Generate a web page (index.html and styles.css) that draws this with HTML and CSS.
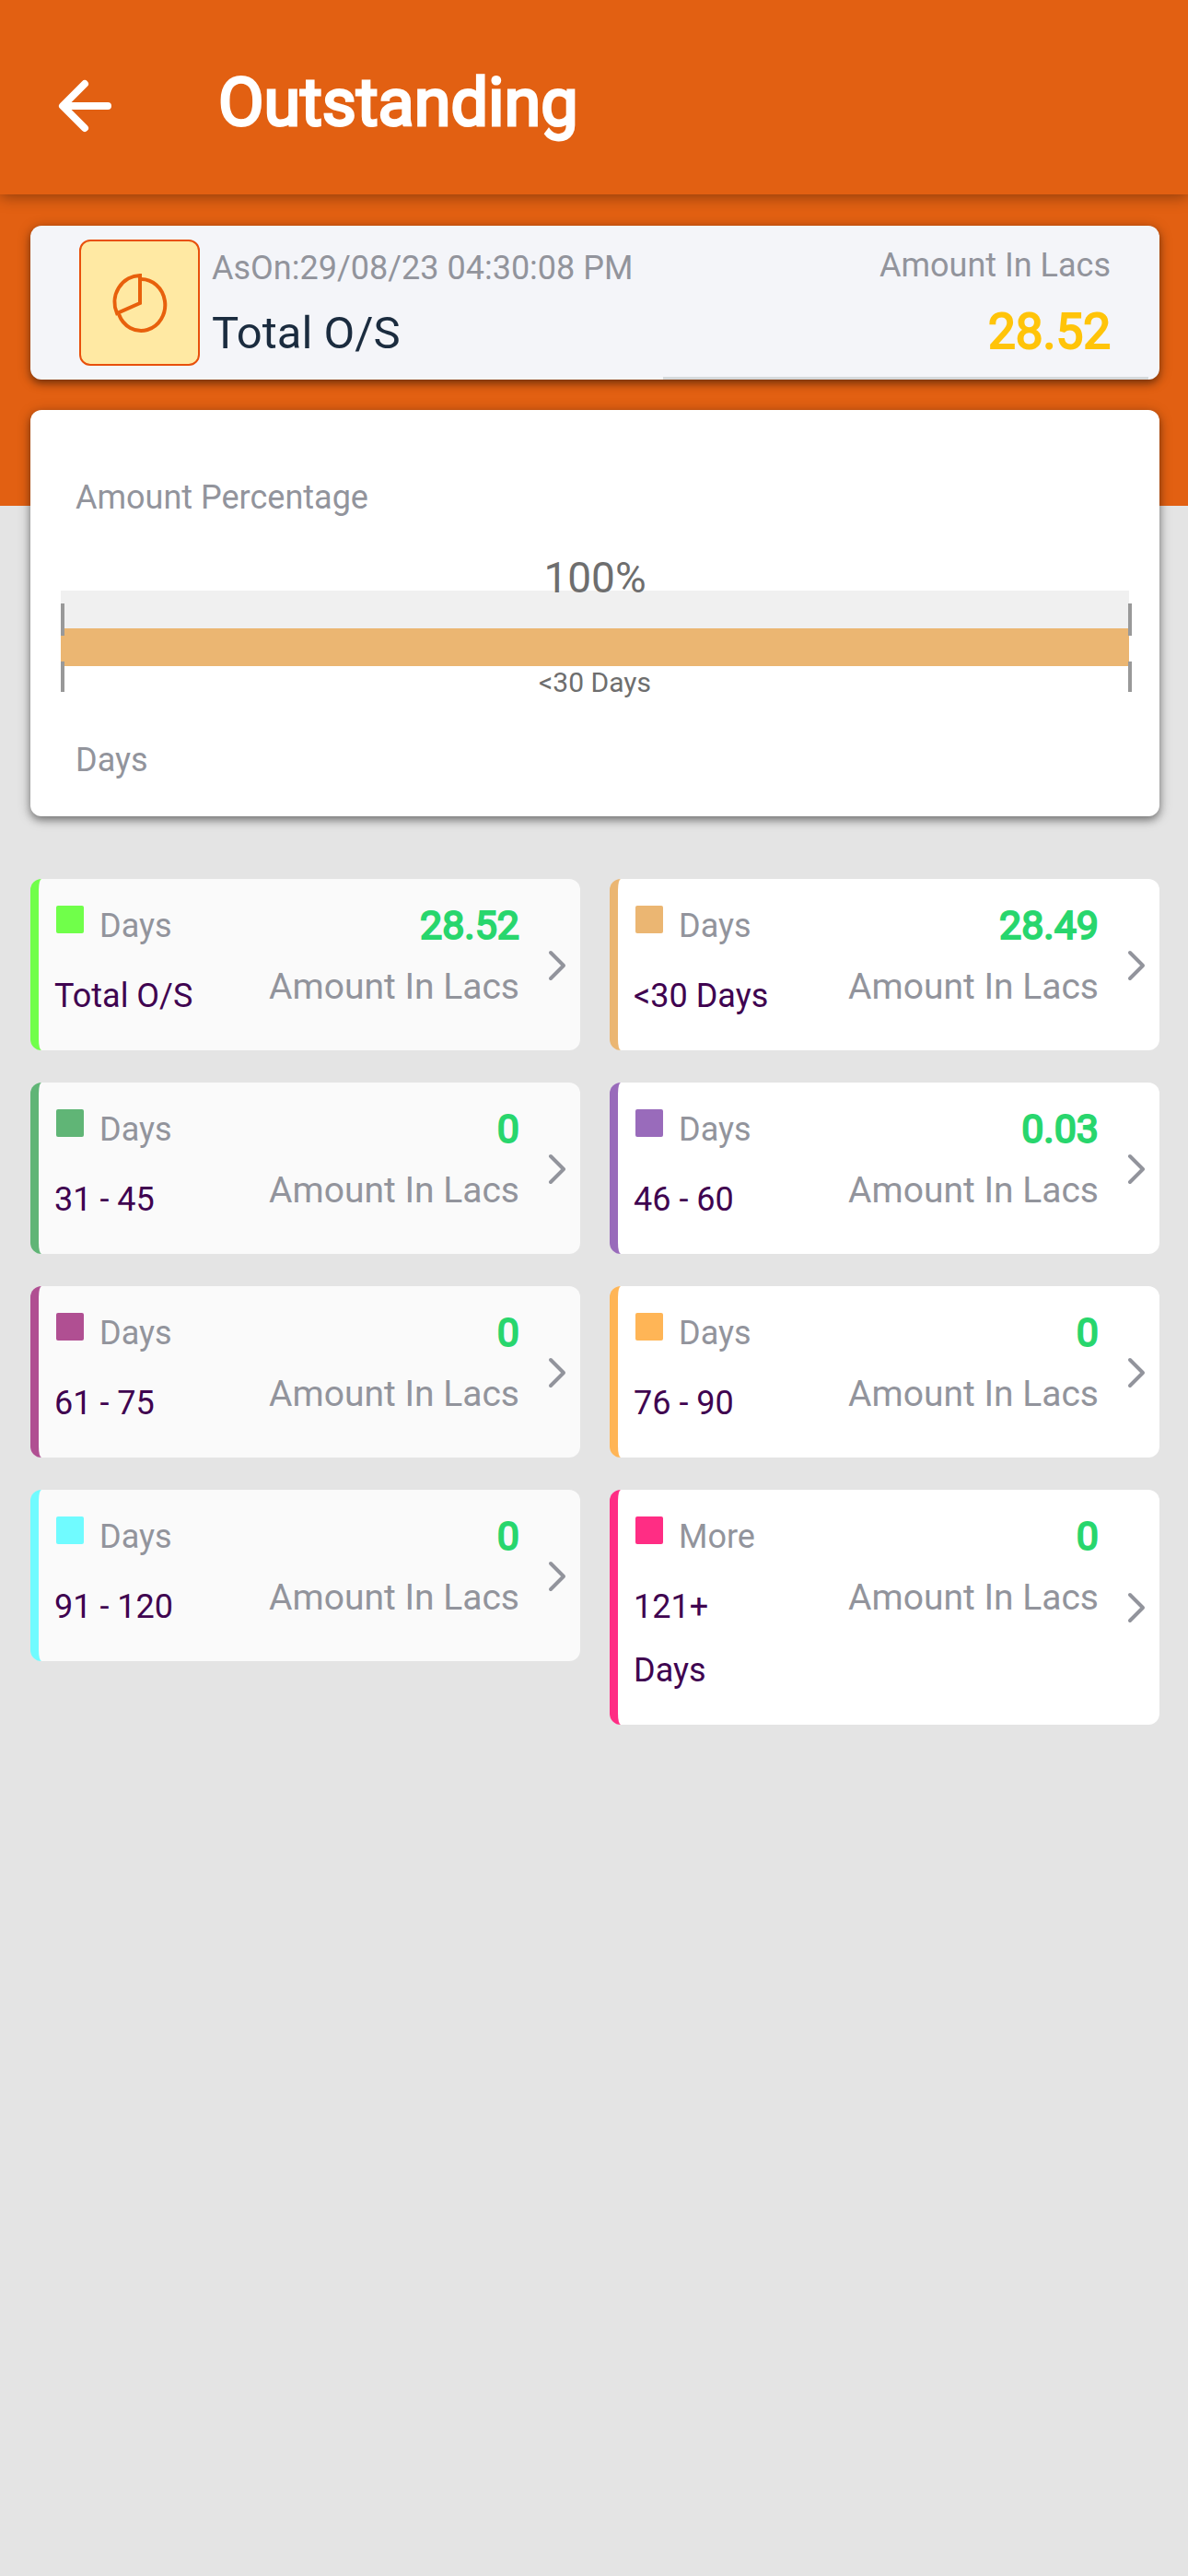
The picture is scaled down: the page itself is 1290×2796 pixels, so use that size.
FILE: index.html
```html
<!DOCTYPE html>
<html lang="en">

<head>
  <meta charset="UTF-8">
  <meta name="viewport" content="width=device-width, initial-scale=1.0">
  <title>Outstanding</title>
  <link rel="stylesheet" href="styles.css">
</head>

<body>
  <header class="toolbar">
    <button class="back" type="button" aria-label="Back">
      <svg width="58" height="58" viewBox="0 0 58 58" fill="none" stroke="currentColor" stroke-width="8" stroke-linecap="round" stroke-linejoin="round">
        <path d="M29 5 5 29l24 24M6 29h48" />
      </svg>
    </button>
    <h1 class="title">Outstanding</h1>
  </header>

  <main class="content">
    <section class="card summary">
      <div class="summary-icon">
        <svg width="64" height="66" viewBox="0 0 64 66" fill="none" stroke="currentColor" stroke-width="4">
          <path d="M32 3v30L7 44A28 29 0 0 1 32 3z" />
          <path d="M32 7A26 28 0 1 1 9 45" />
        </svg>
      </div>
      <div class="summary-info">
        <p class="caption">AsOn:29/08/23 04:30:08 PM</p>
        <h2 class="summary-name">Total O/S</h2>
      </div>
      <div class="summary-total">
        <p class="caption">Amount In Lacs</p>
        <p class="summary-value">28.52</p>
      </div>
    </section>

    <section class="card chart">
      <p class="caption">Amount Percentage</p>
      <div class="scale">
        <div class="scale-percent">100%</div>
        <div class="scale-bars">
          <div class="scale-track"></div>
          <div class="scale-fill" style="width: 100%"></div>
        </div>
        <div class="scale-label">&lt;30 Days</div>
      </div>
      <p class="caption">Days</p>
    </section>

    <nav class="tiles">
      <a class="tile lime" href="#total">
        <div class="range">
          <div class="range-head"><i class="swatch"></i>Days</div>
          <div class="range-name">Total O/S</div>
        </div>
        <div class="amount"><b>28.52</b><span>Amount In Lacs</span></div>
        <svg class="chevron" viewBox="0 0 20 34"><path d="M3 3l14 14L3 31" /></svg>
      </a>
      <a class="tile sand" href="#under-30">
        <div class="range">
          <div class="range-head"><i class="swatch"></i>Days</div>
          <div class="range-name">&lt;30 Days</div>
        </div>
        <div class="amount"><b>28.49</b><span>Amount In Lacs</span></div>
        <svg class="chevron" viewBox="0 0 20 34"><path d="M3 3l14 14L3 31" /></svg>
      </a>
      <a class="tile green" href="#31-45">
        <div class="range">
          <div class="range-head"><i class="swatch"></i>Days</div>
          <div class="range-name">31 - 45</div>
        </div>
        <div class="amount"><b>0</b><span>Amount In Lacs</span></div>
        <svg class="chevron" viewBox="0 0 20 34"><path d="M3 3l14 14L3 31" /></svg>
      </a>
      <a class="tile purple" href="#46-60">
        <div class="range">
          <div class="range-head"><i class="swatch"></i>Days</div>
          <div class="range-name">46 - 60</div>
        </div>
        <div class="amount"><b>0.03</b><span>Amount In Lacs</span></div>
        <svg class="chevron" viewBox="0 0 20 34"><path d="M3 3l14 14L3 31" /></svg>
      </a>
      <a class="tile plum" href="#61-75">
        <div class="range">
          <div class="range-head"><i class="swatch"></i>Days</div>
          <div class="range-name">61 - 75</div>
        </div>
        <div class="amount"><b>0</b><span>Amount In Lacs</span></div>
        <svg class="chevron" viewBox="0 0 20 34"><path d="M3 3l14 14L3 31" /></svg>
      </a>
      <a class="tile orange" href="#76-90">
        <div class="range">
          <div class="range-head"><i class="swatch"></i>Days</div>
          <div class="range-name">76 - 90</div>
        </div>
        <div class="amount"><b>0</b><span>Amount In Lacs</span></div>
        <svg class="chevron" viewBox="0 0 20 34"><path d="M3 3l14 14L3 31" /></svg>
      </a>
      <a class="tile cyan" href="#91-120">
        <div class="range">
          <div class="range-head"><i class="swatch"></i>Days</div>
          <div class="range-name">91 - 120</div>
        </div>
        <div class="amount"><b>0</b><span>Amount In Lacs</span></div>
        <svg class="chevron" viewBox="0 0 20 34"><path d="M3 3l14 14L3 31" /></svg>
      </a>
      <a class="tile pink" href="#over-121">
        <div class="range">
          <div class="range-head"><i class="swatch"></i>More</div>
          <div class="range-name">121+<br>Days</div>
        </div>
        <div class="amount"><b>0</b><span>Amount In Lacs</span></div>
        <svg class="chevron" viewBox="0 0 20 34"><path d="M3 3l14 14L3 31" /></svg>
      </a>
    </nav>
  </main>
</body>

</html>
```
FILE: styles.css
```css
:root {
  --brand: #e26012;
  --page: #e4e4e4;
  --muted: #92949c;
}

* {
  box-sizing: border-box;
}

body {
  margin: 0;
  min-height: 100vh;
  font-family: Roboto, "Liberation Sans", sans-serif;
  font-size: 36px;
  line-height: 44px;
  /* orange band behind the first cards */
  background: linear-gradient(var(--brand) 549px, var(--page) 549px);
}

h1,
h2,
p {
  margin: 0;
}

/* toolbar */
.toolbar {
  display: flex;
  align-items: center;
  gap: 116px;
  height: 211px;
  padding: 18px 63px 0;
  color: #fff;
  background: var(--brand);
  box-shadow: 0 2px 16px rgba(0, 0, 0, 0.4);
}

.back {
  display: flex;
  padding: 0;
  color: inherit;
  background: none;
  border: 0;
  cursor: pointer;
}

.title {
  padding-bottom: 6px;
  font-size: 72px;
  line-height: 84px;
  font-weight: 400;
  -webkit-text-stroke: 3px currentColor;
}

.content {
  padding: 34px 31px 34px 33px;
}

/* cards */
.card {
  border-radius: 12px;
  background: #fff;
  box-shadow: 0 4px 8px rgba(0, 0, 0, 0.4), 0 2px 16px rgba(0, 0, 0, 0.2);
}

.caption {
  color: var(--muted);
}

.summary {
  position: relative;
  display: flex;
  gap: 13px;
  padding: 15px 53px 15px 53px;
  background: #f4f5f9;
}

.summary::after {
  content: "";
  position: absolute;
  left: 56%;
  right: 12px;
  bottom: 0;
  height: 3px;
  background: #d5d9db;
}

.summary-icon {
  display: flex;
  justify-content: center;
  align-items: center;
  width: 131px;
  height: 137px;
  color: #e8600c;
  background: #ffe9a3;
  border: 2px solid #e8500c;
  border-radius: 12px;
}

.summary-info {
  flex: 1;
  padding-top: 9px;
}

.summary-name {
  margin-top: 19px;
  font-size: 49px;
  line-height: 60px;
  font-weight: 400;
  color: #1b2c3f;
}

.summary-total {
  padding-top: 6px;
  text-align: right;
}

.summary-value {
  margin-top: 20px;
  font-size: 53px;
  line-height: 60px;
  color: #ffc409;
  -webkit-text-stroke: 2px currentColor;
}

/* percentage chart */
.chart {
  margin-top: 33px;
  padding: 73px 30px 39px 33px;
}

.chart .caption {
  padding-left: 16px;
}

.scale {
  margin: 38px 0 44px;
  text-align: center;
  color: #6e6e6e;
}

/* the number hangs a little over the track */
.scale-percent {
  position: relative;
  z-index: 1;
  height: 41px;
  padding-right: 3px;
  font-size: 46px;
  line-height: 54px;
}

.scale-bars {
  position: relative;
  padding-right: 3px;
}

.scale-track {
  height: 41px;
  background: #f0f0f0;
}

.scale-fill {
  height: 41px;
  background: #ebb672;
}

/* end ticks, above and below the bar */
.scale-bars::before,
.scale-bars::after {
  content: "";
  position: absolute;
  top: 14px;
  width: 4px;
  height: 96px;
  background: linear-gradient(#999 35px, transparent 35px 63px, #999 63px);
}

.scale-bars::before {
  left: 0;
}

.scale-bars::after {
  right: 0;
}

.scale-label {
  padding-right: 3px;
  font-size: 30px;
  line-height: 36px;
}

/* ageing tiles */
.tiles {
  display: grid;
  grid-template-columns: 1fr 1fr;
  align-items: start;
  gap: 35px 32px;
  margin-top: 68px;
}

.tile {
  display: flex;
  padding: 29px 15px 24px 17px;
  color: var(--muted);
  text-decoration: none;
  background: #fff;
  border-left: 9px solid var(--tint);
  border-radius: 12px;
}

.tile:nth-child(odd) {
  background: #fafafa;
}

.range-head {
  display: flex;
  gap: 17px;
  padding-left: 2px;
}

.swatch {
  width: 30px;
  height: 30px;
  border-radius: 2px;
  background: var(--tint);
}

.range-name {
  margin-top: 20px;
  line-height: 69px;
  color: #3f0350;
}

.amount {
  display: flex;
  flex-direction: column;
  gap: 24px;
  margin-left: auto;
  text-align: right;
  font-size: 39px;
}

.amount b {
  font-size: 43px;
  line-height: 42px;
  font-weight: 400;
  color: #28d66d;
  -webkit-text-stroke: 2px currentColor;
}

.chevron {
  align-self: center;
  width: 20px;
  height: 34px;
  margin: 0 0 4px 31px;
  fill: none;
  stroke: currentColor;
  stroke-width: 4;
  stroke-linecap: round;
  stroke-linejoin: round;
}

.lime { --tint: #70ff4a; }
.sand { --tint: #ebb672; }
.green { --tint: #60b576; }
.purple { --tint: #996bbb; }
.plum { --tint: #b04f92; }
.orange { --tint: #ffb556; }
.cyan { --tint: #70fbff; }
.pink { --tint: #ff2d84; }
```
